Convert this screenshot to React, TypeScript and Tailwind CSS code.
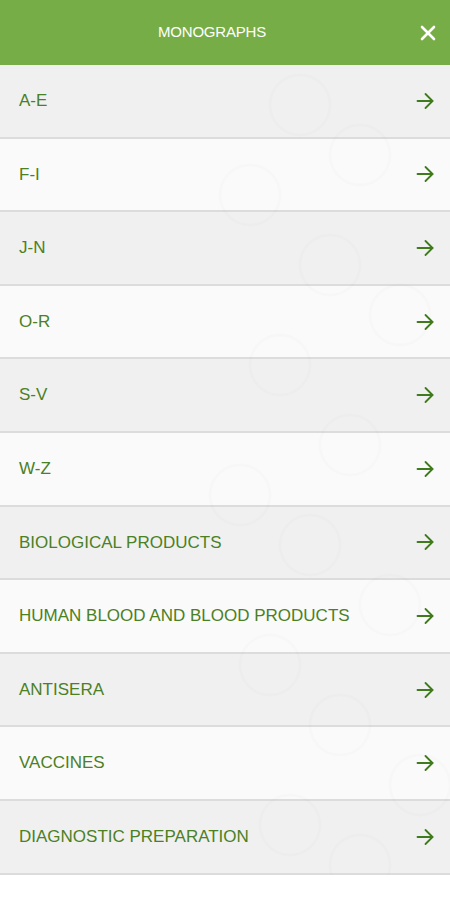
import { X } from "lucide-react";

const ITEMS = [
  "A-E",
  "F-I",
  "J-N",
  "O-R",
  "S-V",
  "W-Z",
  "BIOLOGICAL PRODUCTS",
  "HUMAN BLOOD AND BLOOD PRODUCTS",
  "ANTISERA",
  "VACCINES",
  "DIAGNOSTIC PREPARATION",
];

// faint molecule-like rings in the background
const RINGS = [
  [300, 40], [360, 90], [250, 130], [330, 200], [400, 250], [280, 300],
  [350, 380], [240, 430], [310, 480], [390, 540], [270, 600], [340, 660],
  [420, 720], [290, 760], [360, 800],
];

function Arrow() {
  return (
    <svg width="18" height="18" viewBox="0 0 18 18" fill="none" stroke="#3f7a1d" strokeWidth="1.8" strokeLinecap="round" strokeLinejoin="round">
      <path d="M1.5 9h15" />
      <path d="M9.5 2l7 7-7 7" />
    </svg>
  );
}

export default function App() {
  return (
    <div className="w-[450px] h-[900px] bg-white font-['Liberation_Sans',Arial,sans-serif]">
      <header className="h-[65px] bg-[#77ad46] flex items-center relative">
        <h1 className="flex-1 text-center text-white text-[15px] tracking-[-0.2px] pr-[26px]">MONOGRAPHS</h1>
        <button className="absolute right-[10px] top-[21px] text-white">
          <X size={24} strokeWidth={2.6} />
        </button>
      </header>

      <div className="relative">
        <svg className="absolute inset-0 pointer-events-none" width="450" height="810" viewBox="0 0 450 810">
          {RINGS.map(([x, y], i) => (
            <circle key={i} cx={x} cy={y} r="30" fill="none" stroke="#000" strokeOpacity="0.012" strokeWidth="3" />
          ))}
        </svg>
        <ul>
          {ITEMS.map((label, i) => (
            <li
              key={label}
              className={`h-[73.6px] flex items-center justify-between pl-[19px] pr-[16px] border-b-2 border-[#dcdcdc] ${i % 2 === 0 ? "bg-[#f0f0f0]" : "bg-[#fafafa]"}`}
            >
              <span className="text-[17px] text-[#4b8024] relative">{label}</span>
              <span className="relative"><Arrow /></span>
            </li>
          ))}
        </ul>
      </div>
    </div>
  );
}
